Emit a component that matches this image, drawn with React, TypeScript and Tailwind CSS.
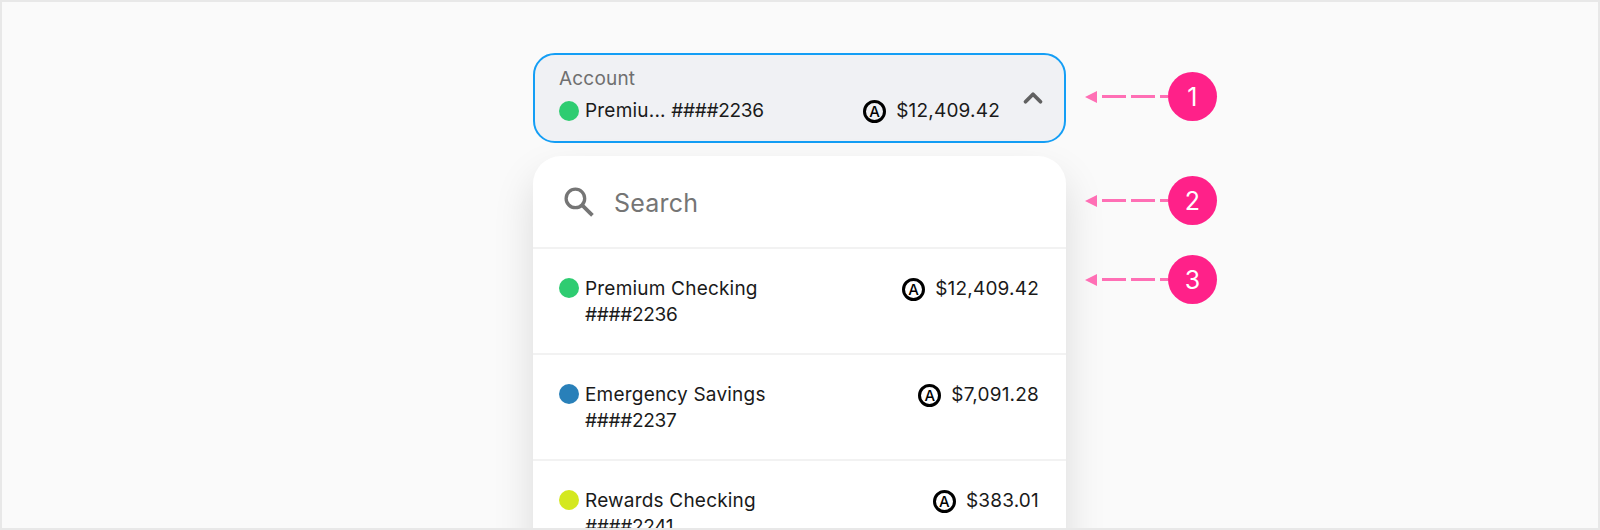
import { ChevronUp } from 'lucide-react';

const accounts = [
  { name: 'Premium Checking', number: '####2236', amount: '$12,409.42', color: 'bg-[#2ecc71]' },
  { name: 'Emergency Savings', number: '####2237', amount: '$7,091.28', color: 'bg-[#2980b9]' },
  { name: 'Rewards Checking', number: '####2241', amount: '$383.01', color: 'bg-[#d4e81f]' },
];

function AssetIcon() {
  return (
    <span className="flex h-[23px] w-[23px] shrink-0 items-center justify-center rounded-full border-[3px] border-black text-[15px] font-medium leading-none tracking-normal text-black">
      A
    </span>
  );
}

function SearchIcon() {
  return (
    <svg width="33" height="33" viewBox="0 0 32 32" fill="none" stroke="#757575" strokeWidth="3.2">
      <circle cx="13" cy="13" r="9" />
      <path d="M20 20l9.5 9.5" strokeWidth="3.6" />
    </svg>
  );
}

function Callout({ top, label }: { top: string; label: string }) {
  return (
    <div className={`absolute left-[1083px] flex items-center ${top}`}>
      <div className="h-0 w-0 border-y-[6.5px] border-r-[12px] border-y-transparent border-r-[#ff6fb5]" />
      <div className="ml-[5px] flex gap-[5px]">
        <div className="h-[2.5px] w-[24px] bg-[#ff6fb5]" />
        <div className="h-[2.5px] w-[24px] bg-[#ff6fb5]" />
        <div className="h-[2.5px] w-[8px] bg-[#ff6fb5]" />
      </div>
      <div className="flex h-[49px] w-[49px] items-center justify-center rounded-full bg-[#ff2189] pt-[2px] text-[25px] text-white">
        {label}
      </div>
    </div>
  );
}

export default function App() {
  return (
    <div className="relative h-[530px] w-[1600px] overflow-hidden border-2 border-[#e8e8e8] bg-[#fafafa] font-['Inter',sans-serif] text-[19px] tracking-[0.2px] text-[#1a1a1a]">
      <div className="ml-[531px] mt-[51px] w-[533px]">
        <div className="flex h-[90px] items-center rounded-[22px] border-2 border-[#149ef5] bg-[#f0f1f4] pl-[24px] pr-[16px]">
          <div className="mb-[6px] flex-1">
            <div className="text-[#6f6f6f] leading-[26px]">Account</div>
            <div className="mt-[6px] flex items-center leading-[26px]">
              <span className="mr-[6px] h-[20px] w-[20px] rounded-full bg-[#2ecc71]" />
              <span>
                Premiu... <span className="tracking-[-0.3px]">####2236</span>
              </span>
              <span className="ml-auto flex items-center gap-[10px]">
                <AssetIcon />
                $12,409.42
              </span>
            </div>
          </div>
          <ChevronUp className="ml-[18px] text-[#616161]" size={30} strokeWidth={3} />
        </div>

        <div className="mt-[13px] rounded-t-[28px] bg-white shadow-[0_20px_40px_rgba(0,0,0,0.13)]">
          <div className="flex h-[93px] items-center gap-[19px] border-b-2 border-[#f2f2f2] pl-[29px]">
            <SearchIcon />
            <span className="pt-[4px] text-[25px] text-[#757575]">Search</span>
          </div>
          {accounts.map((a) => (
            <div key={a.number} className="flex h-[106px] items-start border-b-2 border-[#f2f2f2] pl-[26px] pr-[27px] pt-[27px] last:border-b-0">
              <span className={`mr-[6px] mt-[2px] h-[20px] w-[20px] rounded-full ${a.color}`} />
              <div className="flex-1 leading-[26px]">
                <div>{a.name}</div>
                <div className="tracking-[-0.3px]">{a.number}</div>
              </div>
              <div className="flex items-center gap-[10px] leading-[26px]">
                <AssetIcon />
                {a.amount}
              </div>
            </div>
          ))}
        </div>
      </div>

      <Callout top="top-[70px]" label="1" />
      <Callout top="top-[174px]" label="2" />
      <Callout top="top-[253px]" label="3" />
    </div>
  );
}
